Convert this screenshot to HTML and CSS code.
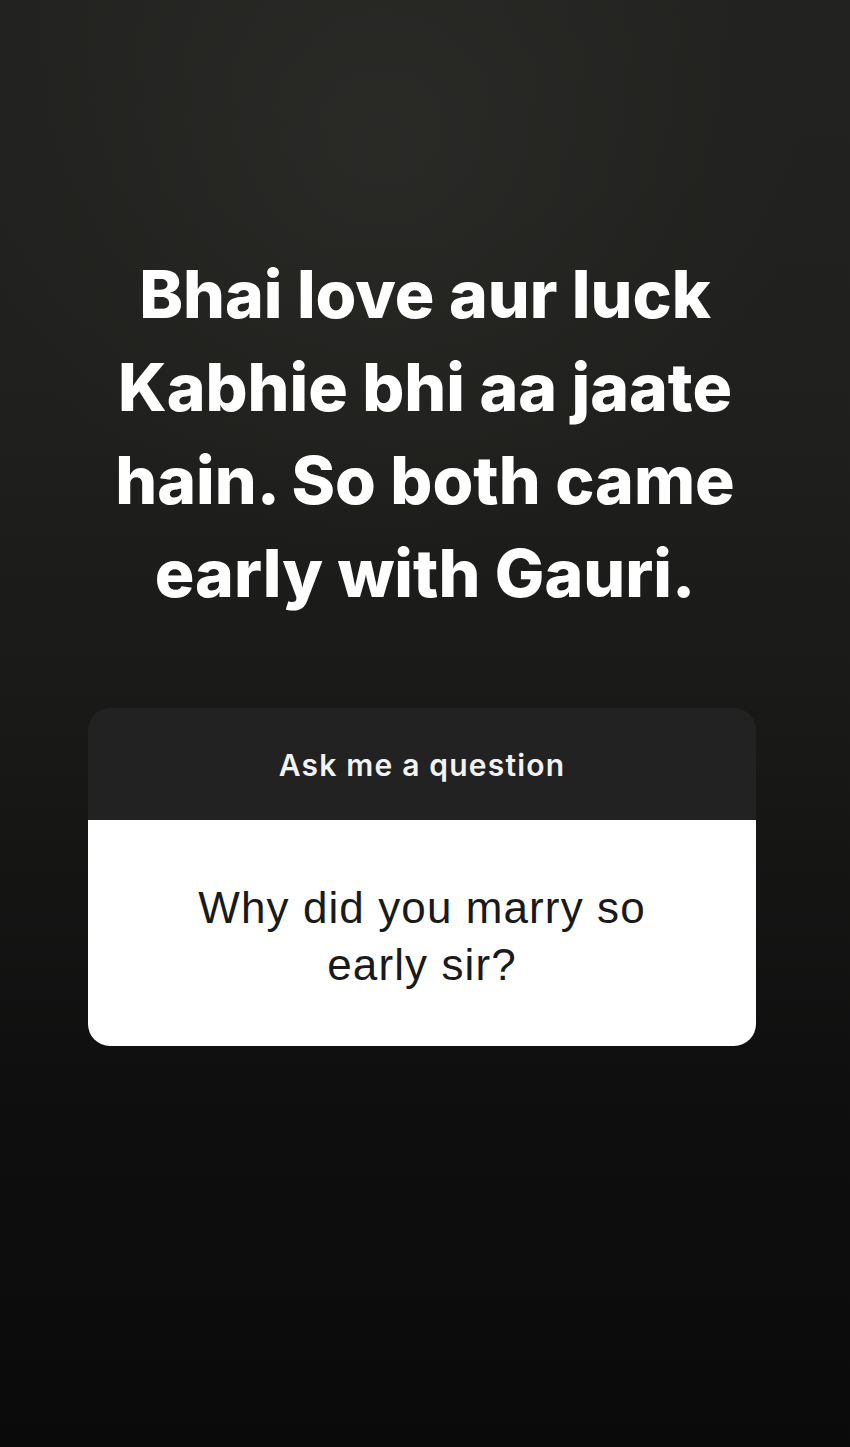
FILE: index.html
```html
<!DOCTYPE html>
<html lang="en">
<head>
  <meta charset="UTF-8" />
  <meta name="viewport" content="width=device-width, initial-scale=1" />
  <title>Story - Ask me a question</title>
  <link rel="stylesheet" href="styles.css">
</head>
<body>
  <main class="story">
    <!-- Answer text -->
    <h1 class="answer">Bhai love aur luck Kabhie bhi aa jaate hain. So both came early with Gauri.</h1>

    <!-- Question sticker -->
    <div class="sticker">
      <div class="sticker-head">Ask me a question</div>
      <div class="sticker-body">
        <p>Why did you marry so<br>early sir?</p>
      </div>
    </div>
  </main>
</body>
</html>
```

FILE: styles.css
```css
/* Reset & base */
* {
  margin: 0;
  padding: 0;
  box-sizing: border-box;
}
html,
body {
  height: 100%;
}
body {
  font-family: Inter, Roboto, 'Noto Sans', sans-serif;
  background: #0b0b0b;
}
.story {
  min-height: 100vh;
  display: flex;
  flex-direction: column;
  align-items: center;
  padding-top: 248px;
  background:
    radial-gradient(ellipse 70% 40% at 45% 10%, rgba(60, 60, 56, 0.3), transparent 70%),
    linear-gradient(180deg, #222220 0%, #1f1f1d 30%, #171716 55%, #0f0f0f 75%, #0a0a0a 100%);
}
.answer {
  width: 760px;
  color: #fff;
  font-size: 66px;
  font-weight: 800;
  line-height: 93px;
  letter-spacing: 0;
  text-align: center;
}
.sticker {
  width: 668px;
  margin: 88px 6px 0 0;
  border-radius: 22px;
  overflow: hidden;
}
.sticker-head {
  height: 112px;
  background: #222222;
  color: #f2f2f2;
  font-size: 30px;
  font-weight: 600;
  letter-spacing: 1.2px;
  display: flex;
  align-items: center;
  justify-content: center;
  padding-top: 2px;
}
.sticker-body {
  height: 226px;
  background: #fff;
  display: flex;
  align-items: center;
  justify-content: center;
  padding-top: 6px;
}
.sticker-body p {
  color: #1a1a1a;
  font-family: 'Liberation Sans', Arial, sans-serif;
  font-size: 44px;
  line-height: 57px;
  letter-spacing: 1.1px;
  text-align: center;
}
```
